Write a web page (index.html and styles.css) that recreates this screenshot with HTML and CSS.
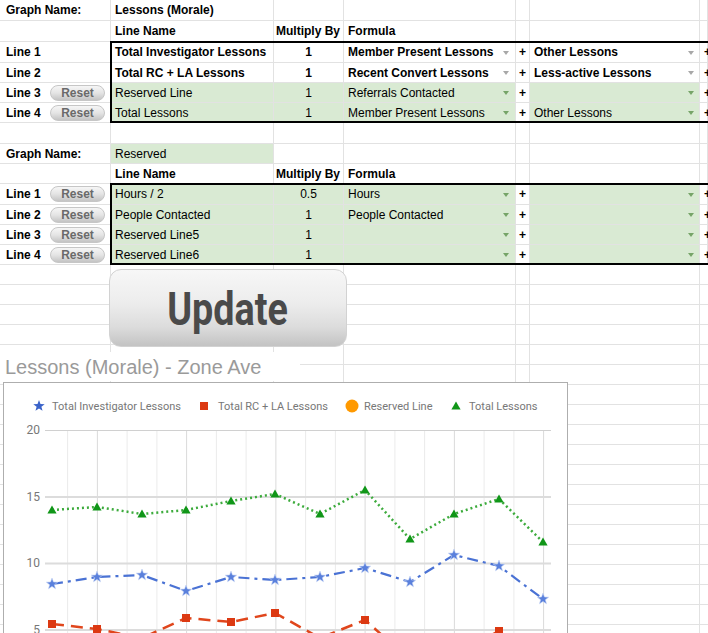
FILE: index.html
```html
<!DOCTYPE html>
<html>
<head>
<meta charset="utf-8">
<link rel="stylesheet" href="styles.css">
</head>
<body>
<div class="sheet">
  <div class="row h21">
    <div class="c a b">Graph Name:</div><div class="c b">Lessons (Morale)</div><div class="c"></div><div class="c"></div><div class="c"></div><div class="c"></div><div class="c"></div>
  </div>
  <div class="row h21">
    <div class="c a"></div><div class="c b">Line Name</div><div class="c b mul">Multiply By</div><div class="c b">Formula</div><div class="c"></div><div class="c"></div><div class="c"></div>
  </div>
  <div class="block">
    <div class="row h21">
      <div class="c a b">Line 1</div><div class="c b">Total Investigator Lessons</div><div class="c b ctr">1</div><div class="c b dd">Member Present Lessons<span class="arr"></span></div><div class="c b ctr">+</div><div class="c b dd dd2">Other Lessons<span class="arr"></span></div><div class="c b">+</div>
    </div>
    <div class="row h20">
      <div class="c a b">Line 2</div><div class="c b">Total RC + LA Lessons</div><div class="c b ctr">1</div><div class="c b dd">Recent Convert Lessons<span class="arr"></span></div><div class="c b ctr">+</div><div class="c b dd dd2">Less-active Lessons<span class="arr"></span></div><div class="c b">+</div>
    </div>
    <div class="row h20">
      <div class="c a b">Line 3<span class="reset">Reset</span></div><div class="c g">Reserved Line</div><div class="c g ctr">1</div><div class="c g dd">Referrals Contacted<span class="arr ga"></span></div><div class="c b ctr">+</div><div class="c g dd dd2"><span></span><span class="arr ga"></span></div><div class="c b">+</div>
    </div>
    <div class="row h20">
      <div class="c a b">Line 4<span class="reset">Reset</span></div><div class="c g">Total Lessons</div><div class="c g ctr">1</div><div class="c g dd">Member Present Lessons<span class="arr ga"></span></div><div class="c b ctr">+</div><div class="c g dd dd2">Other Lessons<span class="arr ga"></span></div><div class="c b">+</div>
    </div>
  </div>
  <div class="row h21">
    <div class="c a"></div><div class="c"></div><div class="c"></div><div class="c"></div><div class="c"></div><div class="c"></div><div class="c"></div>
  </div>
  <div class="row h20">
    <div class="c a b">Graph Name:</div><div class="c g">Reserved</div><div class="c"></div><div class="c"></div><div class="c"></div><div class="c"></div><div class="c"></div>
  </div>
  <div class="row h20">
    <div class="c a"></div><div class="c b">Line Name</div><div class="c b mul">Multiply By</div><div class="c b">Formula</div><div class="c"></div><div class="c"></div><div class="c"></div>
  </div>
  <div class="block">
    <div class="row h21">
      <div class="c a b">Line 1<span class="reset">Reset</span></div><div class="c g">Hours / 2</div><div class="c g ctr">0.5</div><div class="c g dd">Hours<span class="arr ga"></span></div><div class="c b ctr">+</div><div class="c g dd dd2"><span></span><span class="arr ga"></span></div><div class="c b">+</div>
    </div>
    <div class="row h20">
      <div class="c a b">Line 2<span class="reset">Reset</span></div><div class="c g">People Contacted</div><div class="c g ctr">1</div><div class="c g dd">People Contacted<span class="arr ga"></span></div><div class="c b ctr">+</div><div class="c g dd dd2"><span></span><span class="arr ga"></span></div><div class="c b">+</div>
    </div>
    <div class="row h20">
      <div class="c a b">Line 3<span class="reset">Reset</span></div><div class="c g">Reserved Line5</div><div class="c g ctr">1</div><div class="c g dd"><span></span><span class="arr ga"></span></div><div class="c b ctr">+</div><div class="c g dd dd2"><span></span><span class="arr ga"></span></div><div class="c b">+</div>
    </div>
    <div class="row h20">
      <div class="c a b">Line 4<span class="reset">Reset</span></div><div class="c g">Reserved Line6</div><div class="c g ctr">1</div><div class="c g dd"><span></span><span class="arr ga"></span></div><div class="c b ctr">+</div><div class="c g dd dd2"><span></span><span class="arr ga"></span></div><div class="c b">+</div>
    </div>
  </div>

  <div class="filler">
    <div class="update"><span>Update</span></div>
    <div class="title">Lessons (Morale) - Zone Ave</div>
    <div class="chart">
      <svg width="563" height="250" viewBox="4 383 563 250" xmlns="http://www.w3.org/2000/svg">
        <defs>
          <path id="star" d="M0,-6 L1.47,-2.02 L5.71,-1.85 L2.38,0.77 L3.53,4.85 L0,2.5 L-3.53,4.85 L-2.38,0.77 L-5.71,-1.85 L-1.47,-2.02 Z"/>
          <path id="tri" d="M0,-4.5 L4.6,3.6 L-4.6,3.6 Z"/>
          <rect id="sq" x="-4" y="-4" width="8" height="8"/>
        </defs>
        <g class="legend">
          <use href="#star" x="39" y="406" fill="#3b63c9"/>
          <text x="52" y="410">Total Investigator Lessons</text>
          <use href="#sq" x="204" y="406" fill="#dc3912"/>
          <text x="218" y="410">Total RC + LA Lessons</text>
          <circle cx="352" cy="406" r="6.5" fill="#ff9900"/>
          <text x="364" y="410">Reserved Line</text>
          <use href="#tri" x="456" y="406" fill="#109618"/>
          <text x="469" y="410">Total Lessons</text>
        </g>
        <path d="M67.6 430V700M127.1 430V700M156.9 430V700M216.4 430V700M246.1 430V700M305.6 430V700M335.4 430V700M394.9 430V700M424.6 430V700M484.1 430V700M513.9 430V700" stroke="#ebebeb" stroke-width="1"/>
        <path d="M97.4 430V700M186.6 430V700M275.9 430V700M365.1 430V700M454.4 430V700M543.6 430V700" stroke="#dadada" stroke-width="1"/>
        <path d="M45 430.5H551" stroke="#d0d0d0" stroke-width="1"/>
        <path d="M45 497H551M45 563.5H551M45 630H551" stroke="#dcdcdc" stroke-width="2"/>
        <g class="axis">
          <text x="40" y="434">20</text>
          <text x="40" y="501">15</text>
          <text x="40" y="567">10</text>
          <text x="40" y="634">5</text>
        </g>
        <polyline fill="none" stroke="#3cab3c" stroke-width="2.5" stroke-dasharray="2 3" points="52,510 97,507 142,514 186,510 231,501 275,494 320,514 365,490 410,539 454,514 499,499 543,542"/>
        <polyline fill="none" stroke="#4a72d4" stroke-width="2.2" stroke-dasharray="11 5 3 5" points="52,584 97,577 142,575 186,591 231,577 275,580 320,577 365,568 410,582 454,555 499,566 543,599"/>
        <polyline fill="none" stroke="#e0461c" stroke-width="2.5" stroke-dasharray="12 7" points="52,624 97,629 142,638 186,618 231,622 275,613 320,638 365,620 410,660 454,655 499,631 543,655"/>
        <g fill="#109618">
          <use href="#tri" x="52" y="510"/><use href="#tri" x="97" y="507"/><use href="#tri" x="142" y="514"/><use href="#tri" x="186" y="510"/><use href="#tri" x="231" y="501"/><use href="#tri" x="275" y="494"/><use href="#tri" x="320" y="514"/><use href="#tri" x="365" y="490"/><use href="#tri" x="410" y="539"/><use href="#tri" x="454" y="514"/><use href="#tri" x="499" y="499"/><use href="#tri" x="543" y="542"/>
        </g>
        <g fill="#5a80dc" stroke="#c9d6f5" stroke-width="0.6">
          <use href="#star" x="52" y="584"/><use href="#star" x="97" y="577"/><use href="#star" x="142" y="575"/><use href="#star" x="186" y="591"/><use href="#star" x="231" y="577"/><use href="#star" x="275" y="580"/><use href="#star" x="320" y="577"/><use href="#star" x="365" y="568"/><use href="#star" x="410" y="582"/><use href="#star" x="454" y="555"/><use href="#star" x="499" y="566"/><use href="#star" x="543" y="599"/>
        </g>
        <g fill="#dc3912">
          <use href="#sq" x="52" y="624"/><use href="#sq" x="97" y="629"/><use href="#sq" x="142" y="638"/><use href="#sq" x="186" y="618"/><use href="#sq" x="231" y="622"/><use href="#sq" x="275" y="613"/><use href="#sq" x="320" y="638"/><use href="#sq" x="365" y="620"/><use href="#sq" x="499" y="631"/>
        </g>
      </svg>
    </div>
  </div>
</div>
</body>
</html>
```

FILE: styles.css
```css
html, body {
  margin: 0;
  padding: 0;
  overflow: hidden;
  background: #fff;
}
body {
  font-family: "Liberation Sans", Arial, sans-serif;
  font-size: 12px;
  color: #000;
  width: 708px;
  height: 633px;
}
.sheet {
  width: 708px;
  height: 633px;
  overflow: hidden;
}
.row {
  display: grid;
  grid-template-columns: 111px 163px 70px 172px 14px 170px 1fr;
}
.h21 { height: 21px; }
.h20 { height: 20px; }
.c {
  box-sizing: border-box;
  border-right: 1px solid #e2e2e2;
  border-bottom: 1px solid #e2e2e2;
  display: flex;
  align-items: center;
  padding: 0 3px 0 4px;
  white-space: nowrap;
  min-width: 0;
  overflow: visible;
}
.a { padding-left: 6px; }
.b { font-weight: bold; }
.mul { padding-left: 2px; }
.ctr { justify-content: center; padding: 0; }
.g { background: #d9ead3; }
.dd { justify-content: space-between; padding-right: 6px; }
.dd2 { padding-right: 5px; }
.arr {
  width: 0;
  height: 0;
  border-left: 3.5px solid transparent;
  border-right: 3.5px solid transparent;
  border-top: 4px solid #a8a8a8;
  margin-top: 1px;
}
.arr.ga { border-top-color: #76a468; }
.block {
  position: relative;
}
.block::after {
  content: "";
  position: absolute;
  left: 110px;
  top: -1px;
  right: -4px;
  bottom: 0;
  border: 2px solid #000;
  pointer-events: none;
}
.reset {
  margin-left: auto;
  margin-right: 2px;
  width: 55px;
  height: 16px;
  box-sizing: border-box;
  border-radius: 8px;
  border: 1px solid #c6c6c6;
  background: linear-gradient(#f6f6f6 0%, #e4e4e4 50%, #c4c4c4 100%);
  display: flex;
  align-items: center;
  justify-content: center;
  font-family: "Liberation Sans Narrow", "Liberation Sans", Arial, sans-serif;
  font-size: 12px;
  font-weight: bold;
  color: #6a6a6a;
}
.filler {
  position: relative;
  height: 368px;
  overflow: hidden;
  background:
    linear-gradient(#e2e2e2, #e2e2e2) 110px 0 / 1px 100% no-repeat,
    linear-gradient(#e2e2e2, #e2e2e2) 273px 0 / 1px 100% no-repeat,
    linear-gradient(#e2e2e2, #e2e2e2) 343px 0 / 1px 100% no-repeat,
    linear-gradient(#e2e2e2, #e2e2e2) 515px 0 / 1px 100% no-repeat,
    linear-gradient(#e2e2e2, #e2e2e2) 529px 0 / 1px 100% no-repeat,
    linear-gradient(#e2e2e2, #e2e2e2) 699px 0 / 1px 100% no-repeat,
    repeating-linear-gradient(to bottom, transparent 0 19px, #e2e2e2 19px 20px);
}
.update {
  position: absolute;
  left: 109px;
  top: 4px;
  width: 238px;
  height: 78px;
  box-sizing: border-box;
  border: 1px solid #d2d2d2;
  border-radius: 12px;
  background: linear-gradient(#f7f7f7 0%, #ececec 45%, #dcdcdc 75%, #c3c3c3 100%);
  display: flex;
  align-items: center;
  justify-content: center;
}
.update span {
  font-family: Roboto, "Liberation Sans", sans-serif;
  font-weight: bold;
  font-size: 46px;
  color: #4a4a4a;
  transform: scaleX(0.82);
  margin-top: 2px;
}
.title {
  position: absolute;
  left: 0;
  top: 87px;
  width: 300px;
  height: 29px;
  background: #fff;
  padding-left: 5px;
  box-sizing: border-box;
  font-family: "Liberation Sans", Arial, sans-serif;
  font-size: 20px;
  line-height: 30px;
  color: #9a9a9a;
}
.chart {
  position: absolute;
  left: 3px;
  top: 117px;
  width: 565px;
  height: 260px;
  box-sizing: border-box;
  border: 1px solid #aeaeae;
  background: #fff;
}
.chart svg {
  display: block;
}
.legend text {
  font-family: Roboto, "Liberation Sans", sans-serif;
  font-size: 11px;
  fill: #777;
}
.axis text {
  font-family: Roboto, "Liberation Sans", sans-serif;
  font-size: 12px;
  fill: #777;
  text-anchor: end;
}
```
